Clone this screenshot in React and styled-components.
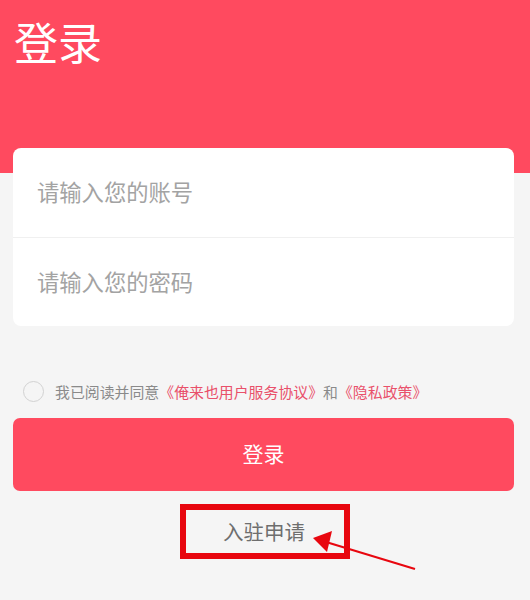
import React from "react";
import styled, { createGlobalStyle } from "styled-components";

const Global = createGlobalStyle`
  html, body { margin: 0; padding: 0; background: #f5f5f5; }
  body { font-family: "Noto Sans CJK SC", "Noto Sans", sans-serif; }
  * { box-sizing: border-box; }
`;

const Page = styled.div`
  position: relative;
  width: 530px;
  height: 600px;
  background: #f5f5f5;
  overflow: hidden;
`;

const Header = styled.header`
  height: 173px;
  background: #ff4a5f;
  padding: 9px 0 0 14px;
`;

const Title = styled.h1`
  margin: 0;
  font-size: 44px;
  font-weight: 400;
  line-height: 64px;
  color: #ffffff;
`;

const Card = styled.div`
  margin: -25px 0 0 13px;
  width: 501px;
  background: #ffffff;
  border-radius: 8px;
  overflow: hidden;
`;

const Field = styled.div`
  height: ${(p) => p.$h}px;
  display: flex;
  align-items: center;
  padding: 0 0 3px 24px;
  font-size: 22.3px;
  color: #a3a3a3;
  border-top: ${(p) => (p.$divider ? "1px solid #f0f0f0" : "none")};
`;

const Agreement = styled.div`
  display: flex;
  align-items: center;
  margin: 55px 0 0 23px;
  height: 20px;
  font-size: 14.9px;
  color: #8a8a8a;
  white-space: nowrap;
`;

const Radio = styled.span`
  width: 21px;
  height: 21px;
  border-radius: 50%;
  border: 1px solid #d2d2d2;
  margin-right: 11px;
  flex-shrink: 0;
`;

const Link = styled.span`
  color: #e9506a;
`;

const LoginButton = styled.button`
  display: flex;
  align-items: center;
  justify-content: center;
  margin: 17px 0 0 13px;
  width: 501px;
  height: 73px;
  border: none;
  border-radius: 7px;
  background: #ff4a5f;
  color: #ffffff;
  font-family: inherit;
  font-size: 21px;
  padding: 0 0 3px;
`;

const ApplyRow = styled.div`
  display: flex;
  justify-content: center;
  padding-right: 2px;
  margin-top: 25px;
`;

const Apply = styled.span`
  position: relative;
  font-size: 20.5px;
  line-height: 30px;
  color: #6e6e6e;
`;

const Highlight = styled.span`
  position: absolute;
  left: -43px;
  top: -12px;
  width: 170px;
  height: 55px;
  border: 6px solid #e8070f;
`;

const Arrow = styled.svg`
  position: absolute;
  left: 0;
  top: 0;
  pointer-events: none;
`;

export default function App() {
  return (
    <Page>
      <Global />
      <Header>
        <Title>登录</Title>
      </Header>
      <Card>
        <Field $h={89}>请输入您的账号</Field>
        <Field $h={89} $divider>请输入您的密码</Field>
      </Card>
      <Agreement>
        <Radio />
        我已阅读并同意<Link>《俺来也用户服务协议》</Link>和<Link>《隐私政策》</Link>
      </Agreement>
      <LoginButton>登录</LoginButton>
      <ApplyRow>
        <Apply>
          入驻申请
          <Highlight />
        </Apply>
      </ApplyRow>
      <Arrow width="530" height="600" viewBox="0 0 530 600">
        <line x1="415" y1="569" x2="326" y2="542" stroke="#e8070f" strokeWidth="2.2" />
        <polygon points="313,538 332,531 327,552" fill="#e8070f" />
      </Arrow>
    </Page>
  );
}
